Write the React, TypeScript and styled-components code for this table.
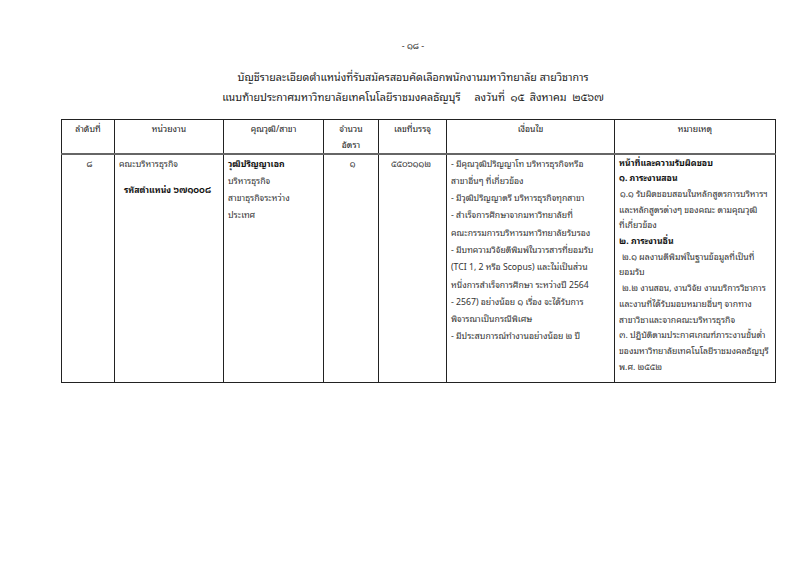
import React from "react";
import styled, { createGlobalStyle } from "styled-components";

const Global = createGlobalStyle`
  html, body { margin: 0; padding: 0; background: #fff; }
  body { font-family: "Noto Sans Thai Looped", Loma, "Noto Sans Thai", sans-serif; color: #333; }
`;

const Page = styled.div`
  width: 800px;
  height: 566px;
  background: #fff;
  box-sizing: border-box;
  padding-top: 37px;
  display: flex;
  flex-direction: column;
  align-items: center;
`;

const PageNumber = styled.div`
  font-size: 9px;
  line-height: 16px;
  text-align: center;
  margin-left: 26px;
`;

const Title = styled.div`
  margin-top: 14px;
  font-size: 10.7px;
  line-height: 20px;
  text-align: center;
  white-space: pre;
  margin-left: 26px;
  color: #222;
`;

const TableBox = styled.div`
  margin-top: 12px;
  margin-left: 36px;
  width: 714px;
`;

const Table = styled.table`
  border-collapse: collapse;
  table-layout: fixed;
  width: 714px;
  font-size: 8.7px;
`;

const Th = styled.th`
  border: 1.5px solid #222;
  border-bottom: 2px solid #666;
  font-weight: normal;
  text-align: center;
  vertical-align: top;
  padding: 0 2px;
  height: 34px;
  box-sizing: border-box;
  line-height: 16px;
  color: #222;
`;

const Td = styled.td<{ $align?: string; $lh?: number; $pl?: number }>`
  border: 1.5px solid #222;
  border-top: none;
  vertical-align: top;
  text-align: ${(p) => p.$align || "left"};
  padding: 0 1px 0 ${(p) => (p.$pl ?? 4)}px;
  line-height: ${(p) => p.$lh ?? 17}px;
  height: 229px;
  box-sizing: border-box;
  overflow: hidden;
`;

const Line = styled.div<{ $bold?: boolean; $indent?: number; $gap?: number }>`
  white-space: nowrap;
  font-weight: ${(p) => (p.$bold ? "bold" : "normal")};
  color: ${(p) => (p.$bold ? "#111" : "inherit")};
  padding-left: ${(p) => p.$indent ?? 0}px;
  margin-top: ${(p) => p.$gap ?? 0}px;
`;

const cols = [53, 109, 100, 55, 68, 168, 161];

const conditions = [
  "- มีคุณวุฒิปริญญาโท บริหารธุรกิจหรือ",
  "สาขาอื่นๆ ที่เกี่ยวข้อง",
  "- มีวุฒิปริญญาตรี บริหารธุรกิจทุกสาขา",
  "- สำเร็จการศึกษาจากมหาวิทยาลัยที่",
  "คณะกรรมการบริหารมหาวิทยาลัยรับรอง",
  "- มีบทความวิจัยตีพิมพ์ในวารสารที่ยอมรับ",
  "(TCI 1, 2 หรือ Scopus) และไม่เป็นส่วน",
  "หนึ่งการสำเร็จการศึกษา ระหว่างปี 2564",
  "- 2567) อย่างน้อย ๑ เรื่อง จะได้รับการ",
  "พิจารณาเป็นกรณีพิเศษ",
  "- มีประสบการณ์ทำงานอย่างน้อย ๒ ปี",
];

const notes: { t: string; b?: boolean; i?: number }[] = [
  { t: "หน้าที่และความรับผิดชอบ", b: true },
  { t: "๑. ภาระงานสอน", b: true },
  { t: "๑.๑ รับผิดชอบสอนในหลักสูตรการบริหารฯ", i: 1 },
  { t: "และหลักสูตรต่างๆ ของคณะ  ตามคุณวุฒิ" },
  { t: "ที่เกี่ยวข้อง" },
  { t: "๒. ภาระงานอื่น", b: true },
  { t: "๒.๑ ผลงานตีพิมพ์ในฐานข้อมูลที่เป็นที่", i: 3 },
  { t: "ยอมรับ" },
  { t: "๒.๒ งานสอน, งานวิจัย งานบริการวิชาการ", i: 3 },
  { t: "และงานที่ได้รับมอบหมายอื่นๆ จากทาง" },
  { t: "สาขาวิชาและจากคณะบริหารธุรกิจ" },
  { t: "๓. ปฏิบัติตามประกาศเกณฑ์ภาระงานขั้นต่ำ" },
  { t: "ของมหาวิทยาลัยเทคโนโลยีราชมงคลธัญบุรี" },
  { t: "พ.ศ. ๒๕๕๒" },
];

export default function App() {
  return (
    <>
      <Global />
      <Page>
        <PageNumber>- ๑๘ -</PageNumber>
        <Title>
          บัญชีรายละเอียดตำแหน่งที่รับสมัครสอบคัดเลือกพนักงานมหาวิทยาลัย สายวิชาการ
          <br />
          {"แนบท้ายประกาศมหาวิทยาลัยเทคโนโลยีราชมงคลธัญบุรี     ลงวันที่  ๑๕  สิงหาคม  ๒๕๖๗"}
        </Title>
        <TableBox>
          <Table>
            <colgroup>
              {cols.map((w, i) => (
                <col key={i} style={{ width: w }} />
              ))}
            </colgroup>
            <thead>
              <tr>
                <Th>ลำดับที่</Th>
                <Th>หน่วยงาน</Th>
                <Th>คุณวุฒิ/สาขา</Th>
                <Th>
                  จำนวน
                  <br />
                  อัตรา
                </Th>
                <Th>เลขที่บรรจุ</Th>
                <Th>เงื่อนไข</Th>
                <Th>หมายเหตุ</Th>
              </tr>
            </thead>
            <tbody>
              <tr>
                <Td $align="center">๘</Td>
                <Td>
                  <Line>คณะบริหารธุรกิจ</Line>
                  <Line $bold $indent={5} $gap={9}>
                    รหัสตำแหน่ง ๖๗๑๐๐๘
                  </Line>
                </Td>
                <Td>
                  <Line $bold>วุฒิปริญญาเอก</Line>
                  <Line>บริหารธุรกิจ</Line>
                  <Line>สาขาธุรกิจระหว่าง</Line>
                  <Line>ประเทศ</Line>
                </Td>
                <Td $align="center">๑</Td>
                <Td $pl={12}>๕๕๐๖๑๑๒</Td>
                <Td $lh={17.3}>
                  {conditions.map((c, i) => (
                    <Line key={i}>{c}</Line>
                  ))}
                </Td>
                <Td $lh={15.7}>
                  {notes.map((n, i) => (
                    <Line key={i} $bold={n.b} $indent={n.i}>
                      {n.t}
                    </Line>
                  ))}
                </Td>
              </tr>
            </tbody>
          </Table>
        </TableBox>
      </Page>
    </>
  );
}
